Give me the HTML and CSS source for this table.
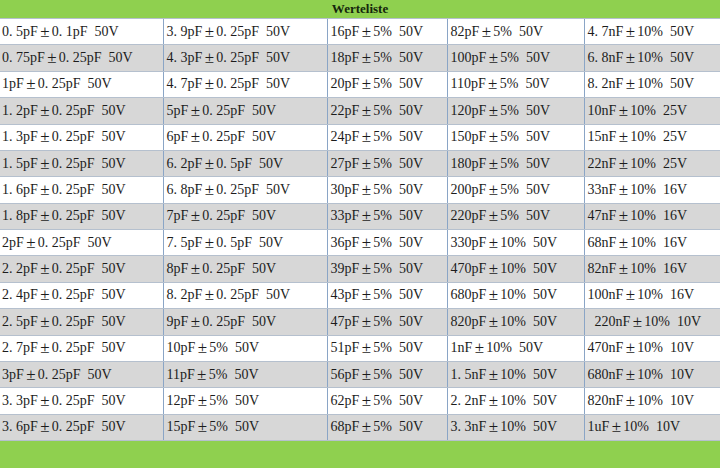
FILE: index.html
```html
<!DOCTYPE html>
<html lang="de">
<head>
<meta charset="utf-8">
<title>Werteliste</title>
<link rel="stylesheet" href="styles.css">
</head>
<body>
<div class="sheet">
  <div class="title">Werteliste</div>
  <table class="values">
    <colgroup>
      <col class="c1"><col class="c2"><col class="c3"><col class="c4"><col class="c5">
    </colgroup>
    <tbody>
      <tr><td>0. 5pF<span class="pm">±</span>0. 1pF  50V</td><td>3. 9pF<span class="pm">±</span>0. 25pF  50V</td><td>16pF<span class="pm">±</span>5%  50V</td><td>82pF<span class="pm">±</span>5%  50V</td><td>4. 7nF<span class="pm">±</span>10%  50V</td></tr>
      <tr><td>0. 75pF<span class="pm">±</span>0. 25pF  50V</td><td>4. 3pF<span class="pm">±</span>0. 25pF  50V</td><td>18pF<span class="pm">±</span>5%  50V</td><td>100pF<span class="pm">±</span>5%  50V</td><td>6. 8nF<span class="pm">±</span>10%  50V</td></tr>
      <tr><td>1pF<span class="pm">±</span>0. 25pF  50V</td><td>4. 7pF<span class="pm">±</span>0. 25pF  50V</td><td>20pF<span class="pm">±</span>5%  50V</td><td>110pF<span class="pm">±</span>5%  50V</td><td>8. 2nF<span class="pm">±</span>10%  50V</td></tr>
      <tr><td>1. 2pF<span class="pm">±</span>0. 25pF  50V</td><td>5pF<span class="pm">±</span>0. 25pF  50V</td><td>22pF<span class="pm">±</span>5%  50V</td><td>120pF<span class="pm">±</span>5%  50V</td><td>10nF<span class="pm">±</span>10%  25V</td></tr>
      <tr><td>1. 3pF<span class="pm">±</span>0. 25pF  50V</td><td>6pF<span class="pm">±</span>0. 25pF  50V</td><td>24pF<span class="pm">±</span>5%  50V</td><td>150pF<span class="pm">±</span>5%  50V</td><td>15nF<span class="pm">±</span>10%  25V</td></tr>
      <tr><td>1. 5pF<span class="pm">±</span>0. 25pF  50V</td><td>6. 2pF<span class="pm">±</span>0. 5pF  50V</td><td>27pF<span class="pm">±</span>5%  50V</td><td>180pF<span class="pm">±</span>5%  50V</td><td>22nF<span class="pm">±</span>10%  25V</td></tr>
      <tr><td>1. 6pF<span class="pm">±</span>0. 25pF  50V</td><td>6. 8pF<span class="pm">±</span>0. 25pF  50V</td><td>30pF<span class="pm">±</span>5%  50V</td><td>200pF<span class="pm">±</span>5%  50V</td><td>33nF<span class="pm">±</span>10%  16V</td></tr>
      <tr><td>1. 8pF<span class="pm">±</span>0. 25pF  50V</td><td>7pF<span class="pm">±</span>0. 25pF  50V</td><td>33pF<span class="pm">±</span>5%  50V</td><td>220pF<span class="pm">±</span>5%  50V</td><td>47nF<span class="pm">±</span>10%  16V</td></tr>
      <tr><td>2pF<span class="pm">±</span>0. 25pF  50V</td><td>7. 5pF<span class="pm">±</span>0. 5pF  50V</td><td>36pF<span class="pm">±</span>5%  50V</td><td>330pF<span class="pm">±</span>10%  50V</td><td>68nF<span class="pm">±</span>10%  16V</td></tr>
      <tr><td>2. 2pF<span class="pm">±</span>0. 25pF  50V</td><td>8pF<span class="pm">±</span>0. 25pF  50V</td><td>39pF<span class="pm">±</span>5%  50V</td><td>470pF<span class="pm">±</span>10%  50V</td><td>82nF<span class="pm">±</span>10%  16V</td></tr>
      <tr><td>2. 4pF<span class="pm">±</span>0. 25pF  50V</td><td>8. 2pF<span class="pm">±</span>0. 25pF  50V</td><td>43pF<span class="pm">±</span>5%  50V</td><td>680pF<span class="pm">±</span>10%  50V</td><td>100nF<span class="pm">±</span>10%  16V</td></tr>
      <tr><td>2. 5pF<span class="pm">±</span>0. 25pF  50V</td><td>9pF<span class="pm">±</span>0. 25pF  50V</td><td>47pF<span class="pm">±</span>5%  50V</td><td>820pF<span class="pm">±</span>10%  50V</td><td class="indent">220nF<span class="pm">±</span>10%  10V</td></tr>
      <tr><td>2. 7pF<span class="pm">±</span>0. 25pF  50V</td><td>10pF<span class="pm">±</span>5%  50V</td><td>51pF<span class="pm">±</span>5%  50V</td><td>1nF<span class="pm">±</span>10%  50V</td><td>470nF<span class="pm">±</span>10%  10V</td></tr>
      <tr><td>3pF<span class="pm">±</span>0. 25pF  50V</td><td>11pF<span class="pm">±</span>5%  50V</td><td>56pF<span class="pm">±</span>5%  50V</td><td>1. 5nF<span class="pm">±</span>10%  50V</td><td>680nF<span class="pm">±</span>10%  10V</td></tr>
      <tr><td>3. 3pF<span class="pm">±</span>0. 25pF  50V</td><td>12pF<span class="pm">±</span>5%  50V</td><td>62pF<span class="pm">±</span>5%  50V</td><td>2. 2nF<span class="pm">±</span>10%  50V</td><td>820nF<span class="pm">±</span>10%  10V</td></tr>
      <tr><td>3. 6pF<span class="pm">±</span>0. 25pF  50V</td><td>15pF<span class="pm">±</span>5%  50V</td><td>68pF<span class="pm">±</span>5%  50V</td><td>3. 3nF<span class="pm">±</span>10%  50V</td><td>1uF<span class="pm">±</span>10%  10V</td></tr>
    </tbody>
  </table>
</div>
</body>
</html>
```

FILE: styles.css
```css
html, body {
  margin: 0;
  padding: 0;
}

body {
  width: 720px;
  height: 468px;
  background: #8fd04f;
  overflow: hidden;
}

.sheet {
  width: 720px;
}

.title {
  height: 18px;
  line-height: 18px;
  text-align: center;
  font-family: "Liberation Serif", serif;
  font-weight: bold;
  font-size: 13px;
  color: #15260c;
}

.values {
  width: 720px;
  height: 422px;
  border-collapse: collapse;
  table-layout: fixed;
  font-family: "Liberation Serif", serif;
  font-size: 14px;
  color: #1c1c1c;
}

.c1 { width: 163px; }
.c2 { width: 164px; }
.c3 { width: 120px; }
.c4 { width: 137px; }
.c5 { width: 136px; }

.values tr {
  height: 26.375px;
  background: #ffffff;
}

.values tr:nth-child(even) {
  background: #d7d7d7;
}

.values td {
  padding: 0 0 1px 3px;
  white-space: pre;
  overflow: hidden;
  vertical-align: middle;
  border-top: 1px solid #b5c0ce;
  border-bottom: 1px solid #b5c0ce;
  border-left: 1px solid #8aa5c6;
}

.values td:first-child {
  border-left: none;
  padding-left: 2px;
}

.values td.indent {
  padding-left: 10px;
}

.pm {
  display: inline-block;
  width: 14px;
  text-align: center;
  font-size: 17px;
  line-height: 1;
  vertical-align: -1px;
}
```
